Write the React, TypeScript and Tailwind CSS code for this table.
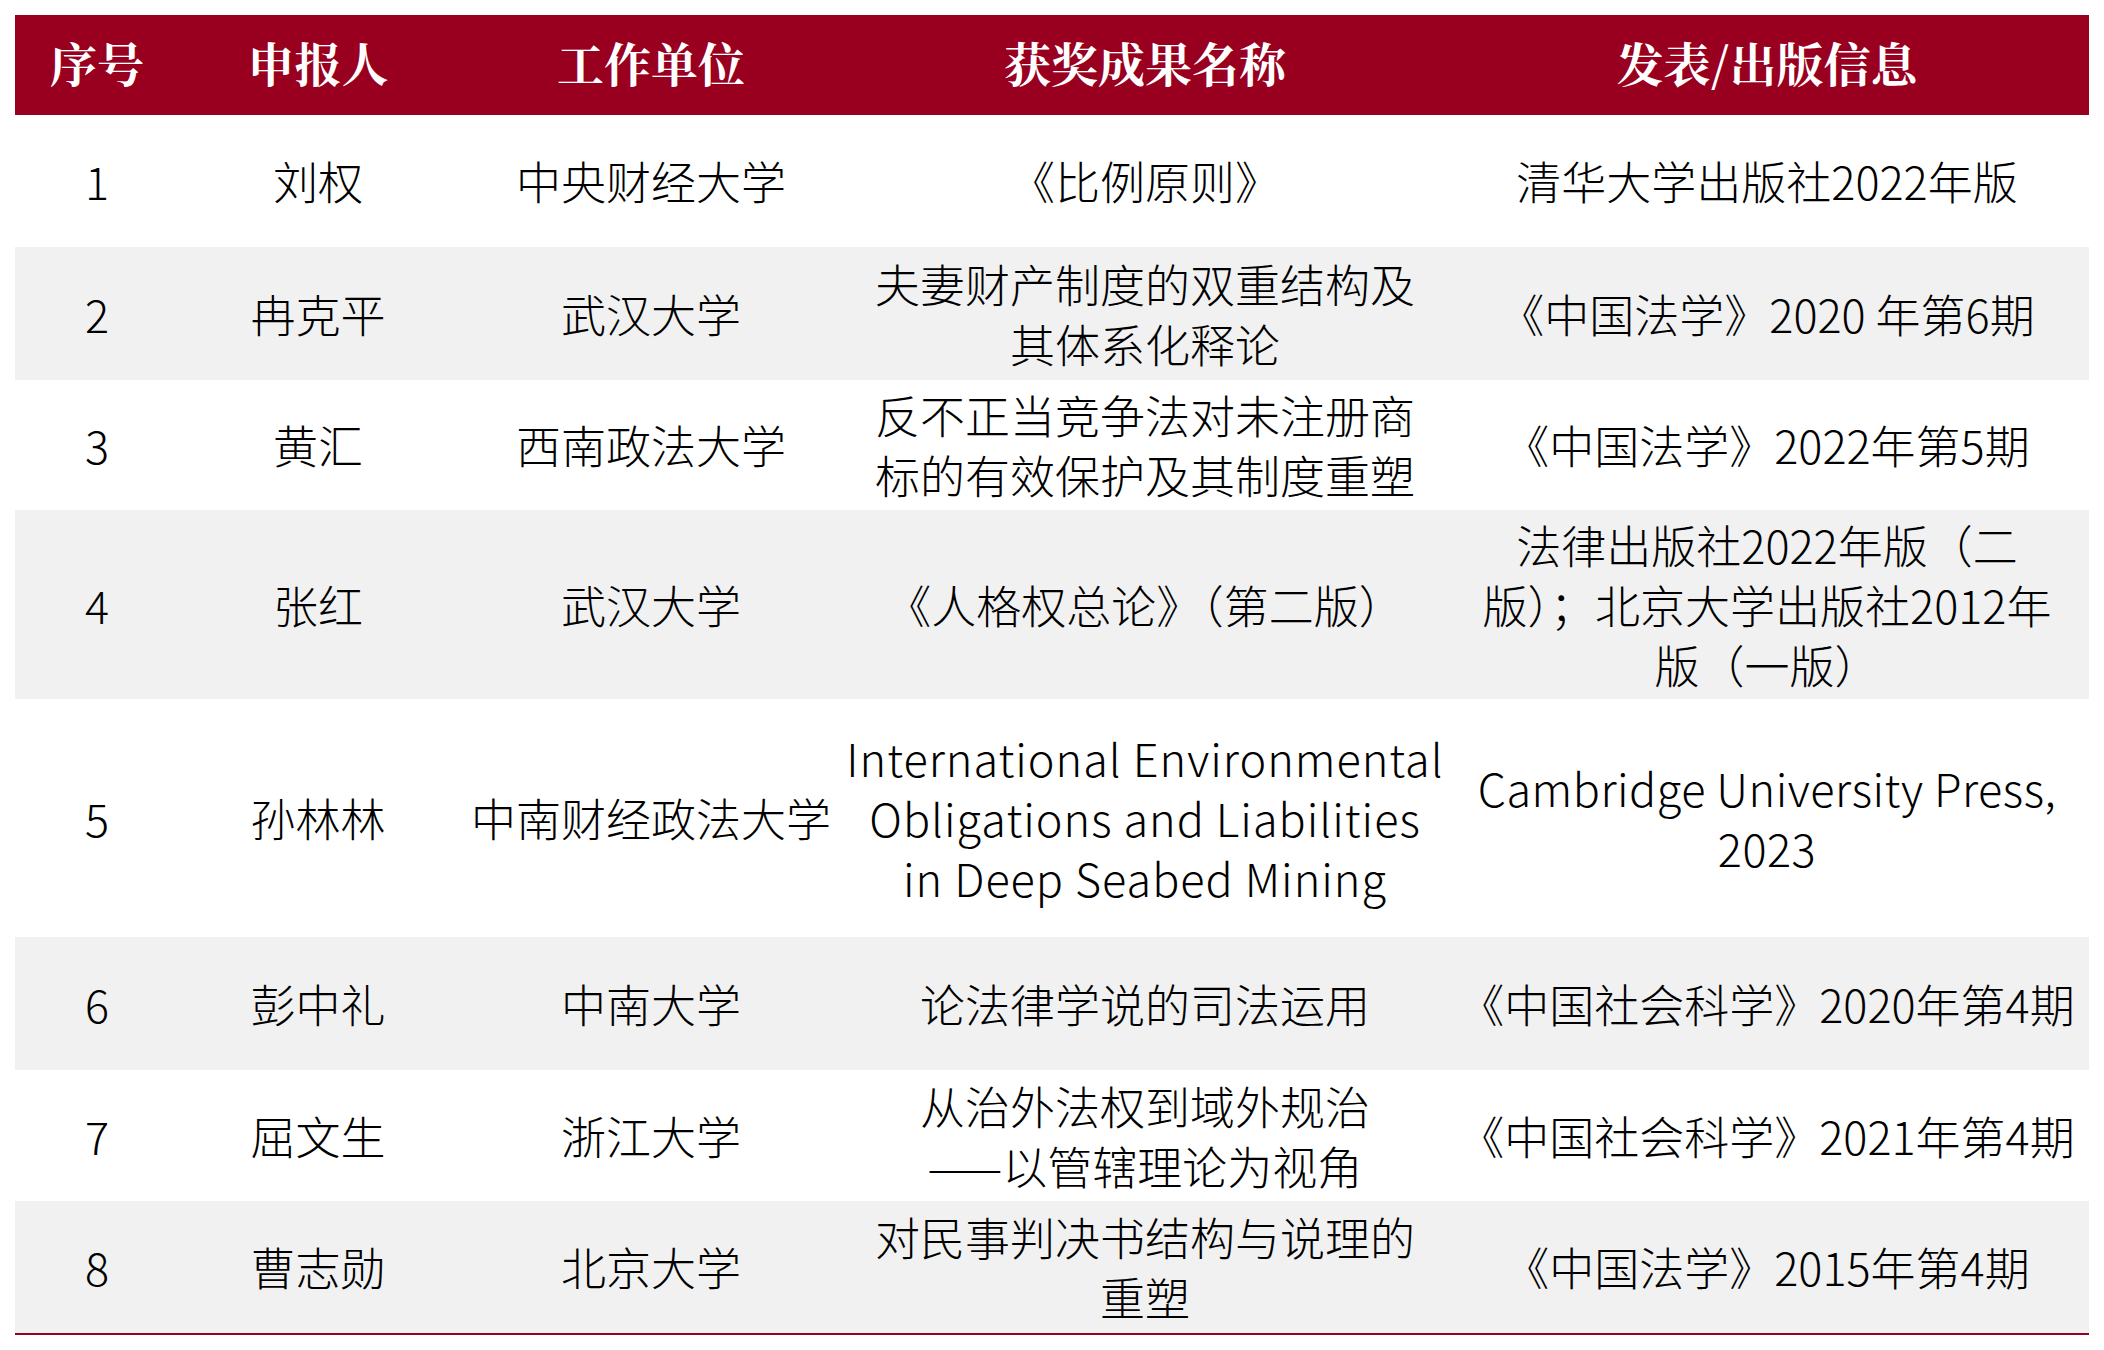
import React from "react";

type Cell = React.ReactNode;

const headers = ["序号", "申报人", "工作单位", "获奖成果名称", "发表/出版信息"];

const rows: { h: string; gray: boolean; cells: Cell[] }[] = [
  {
    h: "h-[132px]",
    gray: false,
    cells: ["1", "刘权", "中央财经大学", "《比例原则》", "清华大学出版社2022年版"],
  },
  {
    h: "h-[133px]",
    gray: true,
    cells: [
      "2",
      "冉克平",
      "武汉大学",
      <>
        夫妻财产制度的双重结构及
        <br />
        其体系化释论
      </>,
      "《中国法学》2020 年第6期",
    ],
  },
  {
    h: "h-[130px]",
    gray: false,
    cells: [
      "3",
      "黄汇",
      "西南政法大学",
      <>
        反不正当竞争法对未注册商
        <br />
        标的有效保护及其制度重塑
      </>,
      "《中国法学》2022年第5期",
    ],
  },
  {
    h: "h-[189px]",
    gray: true,
    cells: [
      "4",
      "张红",
      "武汉大学",
      "《人格权总论》（第二版）",
      <>
        法律出版社2022年版（二
        <br />
        版）；北京大学出版社2012年
        <br />
        版（一版）
      </>,
    ],
  },
  {
    h: "h-[238px]",
    gray: false,
    cells: [
      "5",
      "孙林林",
      "中南财经政法大学",
      <span className="tracking-[1px]">
        International Environmental
        <br />
        Obligations and Liabilities
        <br />
        in Deep Seabed Mining
      </span>,
      <span className="tracking-[0.5px]">
        Cambridge University Press,
        <br />
        2023
      </span>,
    ],
  },
  {
    h: "h-[133px]",
    gray: true,
    cells: ["6", "彭中礼", "中南大学", "论法律学说的司法运用", "《中国社会科学》2020年第4期"],
  },
  {
    h: "h-[131px]",
    gray: false,
    cells: [
      "7",
      "屈文生",
      "浙江大学",
      <>
        从治外法权到域外规治
        <br />
        ——以管辖理论为视角
      </>,
      "《中国社会科学》2021年第4期",
    ],
  },
  {
    h: "h-[132px]",
    gray: true,
    cells: [
      "8",
      "曹志勋",
      "北京大学",
      <>
        对民事判决书结构与说理的
        <br />
        重塑
      </>,
      "《中国法学》2015年第4期",
    ],
  },
];

const cols = "grid grid-cols-[164px_278px_388px_600px_644px]";

export default function App() {
  return (
    <div className="w-[2104px] h-[1350px] bg-white pt-[15px] pl-[15px]">
      <div className="w-[2074px]">
        <div
          className={`${cols} h-[100px] bg-[#99001f] text-white font-bold text-[47px] leading-[60px] pb-[6px]`}
          style={{ fontFamily: '"Noto Serif CJK SC", "Noto Sans CJK SC", serif' }}
        >
          {headers.map((t) => (
            <div key={t} className="flex items-center justify-center text-center whitespace-nowrap">
              {t}
            </div>
          ))}
        </div>
        <div
          className="text-black text-[45px] leading-[60px] font-light"
          style={{ fontFamily: '"Noto Sans CJK SC", sans-serif' }}
        >
          {rows.map((r, i) => (
            <div key={i} className={`${cols} ${r.h} ${r.gray ? "bg-[#f1f1f1]" : "bg-white"}`}>
              {r.cells.map((c, j) => (
                <div key={j} className="flex items-center justify-center text-center whitespace-nowrap">
                  <div>{c}</div>
                </div>
              ))}
            </div>
          ))}
        </div>
        <div className="h-[2px] bg-[#99001f]" />
      </div>
    </div>
  );
}
